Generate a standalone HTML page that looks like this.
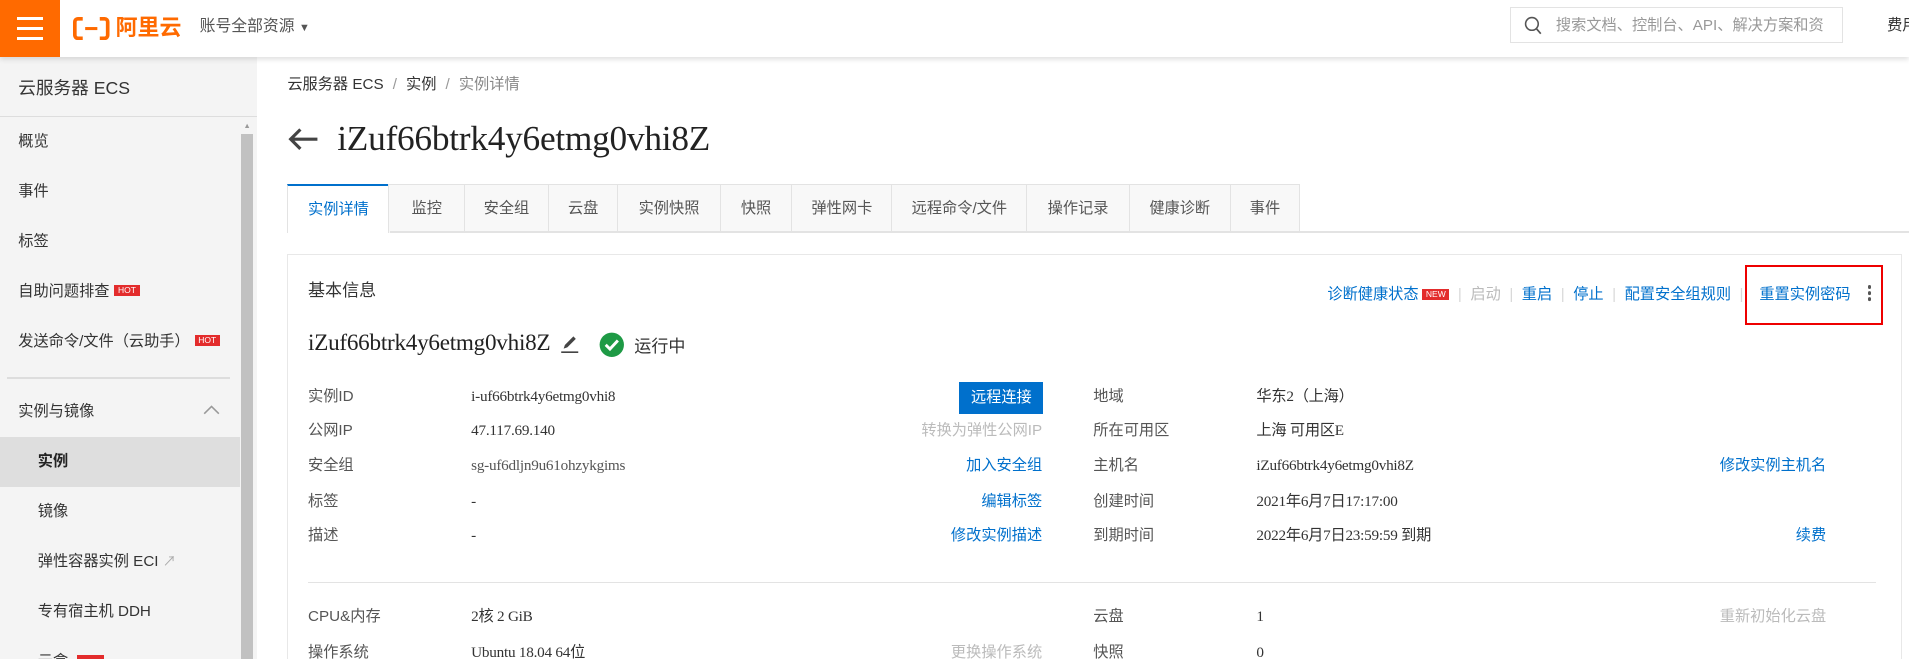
<!DOCTYPE html>
<html><head><meta charset="utf-8">
<style>
html,body{margin:0;padding:0;width:1909px;height:659px;overflow:hidden;background:#fff;}
#r{zoom:1.21747;width:1568px;height:541px;position:relative;overflow:hidden;font-family:"Liberation Sans","Noto Sans CJK SC",sans-serif;color:#333;font-size:12.5px;}
.a{position:absolute;white-space:nowrap;}
.hdr{left:0;top:0;width:1568px;height:47px;background:#fff;box-shadow:0 2px 4px rgba(0,0,0,.12);z-index:5;}
.side{left:0;top:47px;width:211px;height:494px;background:#f4f4f4;}
.si{left:15px;font-size:12.5px;color:#333;}
.hot{display:inline-block;background:#e32c2c;color:#fff;font-size:7px;line-height:9px;padding:0 3px;vertical-align:2px;margin-left:4px;font-family:"Liberation Sans",sans-serif;}
.lk{color:#0070cc;}
.gr{color:#bbb;}
.lab,.val,.r1 .lk,.r1 .gr{line-height:18px;height:18px;}
.lab{color:#555;font-size:12.5px;}
.val{font-family:"Liberation Serif","Noto Sans CJK SC",serif;font-size:12.5px;color:#333;letter-spacing:-0.2px;}
.val span{display:inline-block;vertical-align:top;}
.tab{position:absolute;top:151px;height:40px;line-height:40px;text-align:center;background:#f8f8f8;border:1px solid #e3e3e3;border-bottom:none;box-sizing:border-box;font-size:12.5px;color:#555;}
.sep{color:#d8d8d8;margin:0 7px;}
</style></head><body><div id="r">
<div class="a hdr">
 <div class="a" style="left:0;top:0;width:49px;height:47px;background:#ff6a00;">
  <div class="a" style="left:14px;top:14px;width:21px;height:2.5px;background:#fff"></div>
  <div class="a" style="left:14px;top:22px;width:21px;height:2.5px;background:#fff"></div>
  <div class="a" style="left:14px;top:30px;width:21px;height:2.5px;background:#fff"></div>
 </div>
 <svg class="a" style="left:60px;top:14px" width="30" height="19" viewBox="0 0 30 19"><path d="M8 1.5H4a2.5 2.5 0 0 0-2.5 2.5v11A2.5 2.5 0 0 0 4 17.5h4M22 1.5h4a2.5 2.5 0 0 1 2.5 2.5v11a2.5 2.5 0 0 1-2.5 2.5h-4" fill="none" stroke="#ff6a00" stroke-width="3"/><path d="M10 9.5h10" stroke="#ff6a00" stroke-width="2.5"/></svg>
 <div class="a" style="left:95px;top:10px;font-size:18px;font-weight:bold;color:#ff6a00;line-height:27px;">阿里云</div>
 <div class="a" style="left:164px;top:12px;font-size:13px;color:#555;line-height:20px">账号全部资源 <span style="font-size:9px">▼</span></div>
 <div class="a" style="left:1240px;top:6px;width:274px;height:29px;border:1px solid #e3e3e3;box-sizing:border-box;"></div>
 <svg class="a" style="left:1252px;top:13px" width="15" height="16" viewBox="0 0 15 16"><circle cx="6.5" cy="6.5" r="5.2" fill="none" stroke="#555" stroke-width="1.3"/><path d="M10.3 10.5l3.5 4" stroke="#555" stroke-width="1.4"/></svg>
 <div class="a" style="left:1278px;top:12px;font-size:12.5px;color:#999;line-height:18px">搜索文档、控制台、API、解决方案和资</div>
 <div class="a" style="left:1550px;top:12px;font-size:12.5px;color:#333;line-height:18px">费用</div>
</div>
<div class="a side"></div>
<div class="a" style="left:15px;top:62px;font-size:14.5px;color:#333">云服务器 ECS</div>
<div class="a" style="left:0;top:95px;width:211px;height:1px;background:#ddd"></div>
<div class="a" style="left:198px;top:110px;width:10px;height:431px;background:#c1c1c1"></div>
<div class="a" style="left:200px;top:99px;font-size:6px;color:#999">▲</div>
<div class="a si" style="top:106px">概览</div>
<div class="a si" style="top:147px">事件</div>
<div class="a si" style="top:188px">标签</div>
<div class="a si" style="top:229px">自助问题排查<span class="hot">HOT</span></div>
<div class="a si" style="top:270px">发送命令/文件（云助手）<span class="hot">HOT</span></div>
<div class="a" style="left:6px;top:310px;width:183px;height:1px;background:#ddd"></div>
<div class="a si" style="top:328px">实例与镜像</div>
<svg class="a" style="left:167px;top:332px" width="14" height="9"><path d="M1 8l6-6 6 6" fill="none" stroke="#999" stroke-width="1.3"/></svg>
<div class="a" style="left:0;top:359px;width:197px;height:41px;background:#dedede"></div>
<div class="a si" style="left:31px;top:369px;font-weight:bold;color:#222">实例</div>
<div class="a si" style="left:31px;top:410px">镜像</div>
<div class="a si" style="left:31px;top:451px">弹性容器实例 ECI <span style="color:#aaa;font-size:11px">↗</span></div>
<div class="a si" style="left:31px;top:492px">专有宿主机 DDH</div>
<div class="a si" style="left:31px;top:533px">云盒 <span class="hot" style="padding:0 10px">&nbsp;</span></div>

<div class="a" style="left:236px;top:59px;font-size:12.5px;color:#333">云服务器 ECS <span style="color:#999;margin:0 4px">/</span> 实例 <span style="color:#999;margin:0 4px">/</span> <span style="color:#888">实例详情</span></div>
<svg class="a" style="left:236px;top:104px" width="26" height="20" viewBox="0 0 26 20"><path d="M25 10H3M11 2L3 10l8 8" fill="none" stroke="#444" stroke-width="2.6"/></svg>
<div class="a" style="left:277px;top:96px;font-family:'Liberation Serif',serif;font-size:29px;color:#222;line-height:36px;letter-spacing:-0.2px">iZuf66btrk4y6etmg0vhi8Z</div>

<div class="tab" style="left:236px;width:84px;background:#fff;color:#0070cc;border-top:2px solid #0070cc;">实例详情</div>
<div class="tab" style="left:319px;width:63px">监控</div>
<div class="tab" style="left:381px;width:70px">安全组</div>
<div class="tab" style="left:450px;width:58px">云盘</div>
<div class="tab" style="left:507px;width:85px">实例快照</div>
<div class="tab" style="left:591px;width:60px">快照</div>
<div class="tab" style="left:650px;width:83px">弹性网卡</div>
<div class="tab" style="left:732px;width:112px">远程命令/文件</div>
<div class="tab" style="left:843px;width:85px">操作记录</div>
<div class="tab" style="left:927px;width:84px">健康诊断</div>
<div class="tab" style="left:1010px;width:58px">事件</div>
<div class="a" style="left:320px;top:190px;width:1248px;height:1px;background:#e3e3e3"></div>

<div class="a" style="left:236px;top:209px;width:1326px;height:340px;border:1px solid #e8e8e8;box-sizing:border-box"></div>
<div class="a" style="left:253px;top:227px;font-size:14px;color:#333">基本信息</div>
<div class="a" style="right:48px;top:232px;font-size:12.5px" ><span class="lk">诊断健康状态</span><span class="hot" style="margin-left:3px">NEW</span><span class="sep">|</span><span class="gr">启动</span><span class="sep">|</span><span class="lk">重启</span><span class="sep">|</span><span class="lk">停止</span><span class="sep">|</span><span class="lk">配置安全组规则</span><span class="sep">|</span><span class="lk" style="margin-left:6px">重置实例密码</span></div>
<div class="a" style="left:1534px;top:234px;width:3px;height:3px;border-radius:2px;background:#555;box-shadow:0 5px 0 #555,0 10px 0 #555"></div>
<div class="a" style="left:1433px;top:218px;width:114px;height:49px;border:2px solid #e00;box-sizing:border-box"></div>

<div class="a" style="left:253px;top:271px;font-family:'Liberation Serif',serif;font-size:19px;color:#222;letter-spacing:-0.2px">iZuf66btrk4y6etmg0vhi8Z</div>
<svg class="a" style="left:460px;top:274px" width="16" height="16" viewBox="0 0 16 16"><path d="M3 12l1-3 7-7 2 2-7 7z" fill="#444"/><path d="M1 15h14" stroke="#444" stroke-width="1.5"/></svg>
<svg class="a" style="left:492px;top:273px" width="21" height="21"><circle cx="10.5" cy="10.5" r="10" fill="#1e9a45"/><path d="M5.5 10.5l3.5 3.5 6.5-7" fill="none" stroke="#fff" stroke-width="2.4"/></svg>
<div class="a" style="left:521px;top:273px;font-size:14px;color:#333">运行中</div>

<div class="r1">
<div class="a lab" style="left:253px;top:317px">实例ID</div><div class="a val" style="left:387px;top:317px">i-uf66btrk4y6etmg0vhi8</div>
<div class="a" style="left:788px;top:314px;width:69px;height:26px;background:#0070cc;color:#fff;text-align:center;line-height:26px;font-size:12.5px">远程连接</div>
<div class="a lab" style="left:253px;top:345px">公网IP</div><div class="a val" style="left:387px;top:345px">47.117.69.140</div><div class="a gr" style="right:712px;top:345px">转换为弹性公网IP</div>
<div class="a lab" style="left:253px;top:374px">安全组</div><div class="a val" style="left:387px;top:374px;color:#555">sg-uf6dljn9u61ohzykgims</div><div class="a lk" style="right:712px;top:374px">加入安全组</div>
<div class="a lab" style="left:253px;top:403px">标签</div><div class="a val" style="left:387px;top:403px">-</div><div class="a lk" style="right:712px;top:403px">编辑标签</div>
<div class="a lab" style="left:253px;top:431px">描述</div><div class="a val" style="left:387px;top:431px">-</div><div class="a lk" style="right:712px;top:431px">修改实例描述</div>

<div class="a lab" style="left:898px;top:317px">地域</div><div class="a val" style="left:1032px;top:317px">华东2（上海）</div>
<div class="a lab" style="left:898px;top:345px">所在可用区</div><div class="a val" style="left:1032px;top:345px">上海 可用区E</div>
<div class="a lab" style="left:898px;top:374px">主机名</div><div class="a val" style="left:1032px;top:374px">iZuf66btrk4y6etmg0vhi8Z</div><div class="a lk" style="right:68px;top:374px">修改实例主机名</div>
<div class="a lab" style="left:898px;top:403px">创建时间</div><div class="a val" style="left:1032px;top:403px">2021年6月7日17:17:00</div>
<div class="a lab" style="left:898px;top:431px">到期时间</div><div class="a val" style="left:1032px;top:431px">2022年6月7日23:59:59 到期</div><div class="a lk" style="right:68px;top:431px">续费</div>

<div class="a" style="left:253px;top:478px;width:1288px;height:1px;background:#e3e3e3"></div>
<div class="a lab" style="left:253px;top:498px">CPU&amp;内存</div><div class="a val" style="left:387px;top:498px">2核 2 GiB</div>
<div class="a lab" style="left:253px;top:527px">操作系统</div><div class="a val" style="left:387px;top:527px">Ubuntu 18.04 64位</div><div class="a gr" style="right:712px;top:527px">更换操作系统</div>
<div class="a lab" style="left:898px;top:498px">云盘</div><div class="a val" style="left:1032px;top:498px">1</div><div class="a gr" style="right:68px;top:498px">重新初始化云盘</div>
<div class="a lab" style="left:898px;top:527px">快照</div><div class="a val" style="left:1032px;top:527px">0</div>
</div>
</div></body></html>
